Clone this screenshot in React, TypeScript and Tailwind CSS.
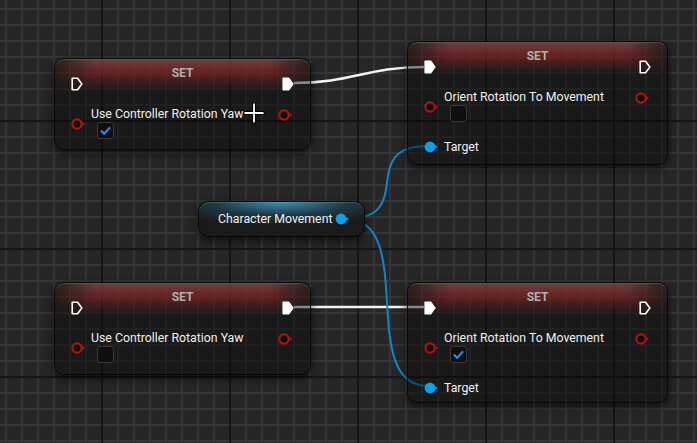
import React from "react"

const RED = "#b01212"
const BLUE = "#0aa0ec"

const ExecPin = ({ filled }: { filled?: boolean }) => (
  <svg width="12" height="14" viewBox="0 0 12 14">
    <path d="M1.2 1.2 H6.6 L10.8 7 L6.6 12.8 H1.2 Z" fill={filled ? "#ffffff" : "none"} stroke="#ffffff" strokeWidth="1.6" strokeLinejoin="round" />
  </svg>
)

const BoolPin = () => (
  <svg width="14" height="12" viewBox="0 0 14 12">
    <circle cx="6" cy="6" r="4.6" fill="#0b0b0b" stroke={RED} strokeWidth="2.2" />
    <path d="M11.4 3.8 L14 6 L11.4 8.2 Z" fill={RED} />
  </svg>
)

const ObjectPin = () => (
  <svg width="14" height="12" viewBox="0 0 14 12">
    <circle cx="6" cy="6" r="5.4" fill={BLUE} />
    <path d="M11.3 4 L13.8 6 L11.3 8 Z" fill={BLUE} />
  </svg>
)

const CheckBox = ({ checked }: { checked?: boolean }) => (
  <div className="ml-[6px] flex h-[17px] w-[17px] items-center justify-center rounded-[3px] border border-[#3a3a3a] bg-[#0f0f0f]">
    {checked && (
      <svg width="11" height="10" viewBox="0 0 11 10">
        <path d="M1.6 5.2 L4.2 7.8 L9.4 2" fill="none" stroke="#2a8cf2" strokeWidth="2" strokeLinecap="square" />
      </svg>
    )}
  </div>
)

interface SetNodeProps {
  pos: string
  label: string
  checked?: boolean
  inFilled?: boolean
  outFilled?: boolean
  target?: boolean
}

const SetNode = (props: SetNodeProps) => {
  return (
    <div
      className={`absolute ${props.pos} overflow-hidden rounded-[10px] border border-[#080808] bg-[rgba(8,8,8,0.42)] shadow-[0_3px_8px_rgba(0,0,0,0.65),inset_0_1px_0_rgba(255,255,255,0.22)]`}
    >
      <div className="absolute inset-x-0 top-0 h-[32px] bg-[linear-gradient(to_bottom,rgba(130,80,80,0.75),rgba(150,40,40,0.62)_40%,rgba(120,20,20,0)_100%)] [mask-image:linear-gradient(to_right,rgba(0,0,0,0.2),black_16%,black_84%,rgba(0,0,0,0.2))]" />
      <div className="relative flex flex-col px-4 pt-[6px]">
        <div className="h-4 text-center text-[12px] font-bold leading-4 text-[#b0b0b0]">SET</div>
        <div className="mt-[-4px] flex h-[14px] items-center justify-between">
          <ExecPin filled={props.inFilled} />
          <ExecPin filled={props.outFilled} />
        </div>
        <div className="mt-4 flex items-start">
          <div className="mt-[11px]">
            <BoolPin />
          </div>
          <div className="ml-[6px] flex flex-col">
            <span className="h-[15px] text-[12.3px] leading-[15px] text-[#efefef]">{props.label}</span>
            <CheckBox checked={props.checked} />
          </div>
          <div className="mr-[2px] ml-auto mt-[2px]">
            <BoolPin />
          </div>
        </div>
        {props.target && (
          <div className="mt-[18px] flex h-[14px] items-center">
            <ObjectPin />
            <span className="ml-[6px] text-[12.3px] leading-[14px] text-[#efefef]">Target</span>
          </div>
        )}
      </div>
    </div>
  )
}

const Cursor = () => (
  <svg className="absolute left-[243px] top-[102px]" width="22" height="22" viewBox="0 0 22 22">
    <path d="M11 0.5 V21.5 M0.5 11 H21.5" stroke="#000" strokeWidth="4" />
    <path d="M11 1.5 V20.5 M1.5 11 H20.5" stroke="#fff" strokeWidth="1.8" />
  </svg>
)

export default function App() {
  return (
    <div className="relative h-[443px] w-[697px] overflow-hidden bg-[#262626] font-['Roboto',sans-serif] [background-image:linear-gradient(to_right,#151515_2px,transparent_2px),linear-gradient(to_bottom,#151515_2px,transparent_2px),linear-gradient(to_right,#353535_2px,transparent_2px),linear-gradient(to_bottom,#353535_2px,transparent_2px)] [background-position:101px_120px,101px_120px,5px_8px,5px_8px] [background-size:128px_128px,128px_128px,16px_16px,16px_16px]">
      {/* wires sit under the nodes */}
      <svg className="absolute inset-0" width="697" height="443">
        <path d="M294 83 C 352 83, 366 67, 424 67" fill="none" stroke="#f2f2f2" strokeWidth="2.6" />
        <path d="M294 307 L424 307" fill="none" stroke="#f2f2f2" strokeWidth="2.6" />
        <path d="M346 219 C 418 219, 356 146, 428 146" fill="none" stroke="#0f86c6" strokeWidth="2" />
        <path d="M346 219 C 418 219, 356 386, 428 386" fill="none" stroke="#0f86c6" strokeWidth="2" />
      </svg>

      <SetNode pos="left-[54px] top-[58px] w-[257px] h-[92px]" label="Use Controller Rotation Yaw" checked outFilled />
      <SetNode pos="left-[407px] top-[41px] w-[261px] h-[124px]" label="Orient Rotation To Movement" inFilled target />
      <SetNode pos="left-[54px] top-[282px] w-[257px] h-[93px]" label="Use Controller Rotation Yaw" outFilled />
      <SetNode pos="left-[407px] top-[282px] w-[261px] h-[121px]" label="Orient Rotation To Movement" checked inFilled target />

      <div className="absolute left-[198px] top-[201px] flex h-[36px] w-[167px] items-center overflow-hidden rounded-[11px] border border-[#080808] bg-[#1a1a1a] shadow-[0_3px_8px_rgba(0,0,0,0.65),inset_0_1px_0_rgba(255,255,255,0.25)]">
        <div className="absolute inset-0 bg-[radial-gradient(ellipse_75%_70%_at_50%_0%,rgba(70,165,205,0.85),rgba(40,110,140,0.35)_55%,transparent_100%)]" />
        <span className="relative ml-[19px] text-[12.3px] text-[#efefef]">Character Movement</span>
        <div className="relative mr-[15px] ml-auto">
          <ObjectPin />
        </div>
      </div>

      <Cursor />
    </div>
  )
}
